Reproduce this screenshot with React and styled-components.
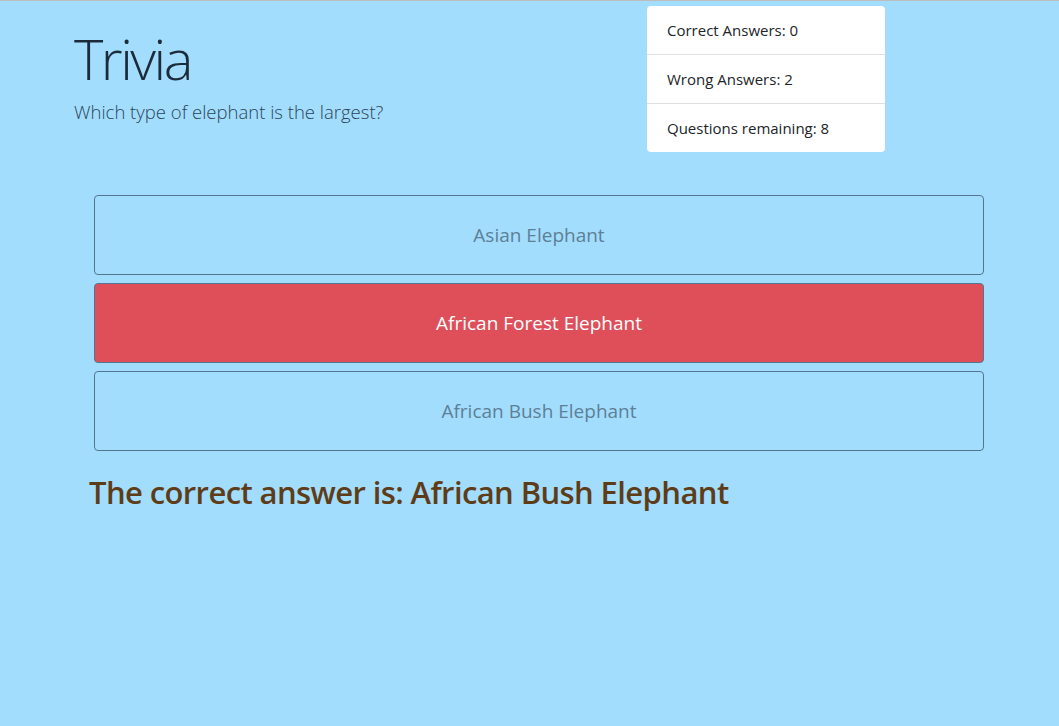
import React from "react";
import styled, { createGlobalStyle } from "styled-components";

const GlobalStyle = createGlobalStyle`
  html, body {
    margin: 0;
    padding: 0;
    background: #a2ddfe;
  }
  body {
    font-family: "Open Sans", "Noto Sans", sans-serif;
    border-top: 1px solid #bdbdbd;
    min-height: 725px;
  }
`;

const answers = [
  { text: "Asian Elephant", state: "idle" },
  { text: "African Forest Elephant", state: "wrong" },
  { text: "African Bush Elephant", state: "idle" },
];

const App = () => {
  return (
    <>
      <GlobalStyle />
      <Page>
        <Header>
          <TitleBlock>
            <Title>Trivia</Title>
            <Question>Which type of elephant is the largest?</Question>
          </TitleBlock>
          <Stats>
            <StatItem>Correct Answers: 0</StatItem>
            <StatItem>Wrong Answers: 2</StatItem>
            <StatItem>Questions remaining: 8</StatItem>
          </Stats>
        </Header>
        <Answers>
          {answers.map((a) => (
            <AnswerButton key={a.text} $wrong={a.state === "wrong"}>
              {a.text}
            </AnswerButton>
          ))}
        </Answers>
        <Result>The correct answer is: African Bush Elephant</Result>
      </Page>
    </>
  );
};

const Page = styled.div`
  display: flex;
  flex-direction: column;
`;

const Header = styled.div`
  display: flex;
  align-items: flex-start;
  padding-left: 74px;
  padding-top: 5px;
`;

const TitleBlock = styled.div`
  width: 573px;
  padding-top: 19px;
`;

const Title = styled.h1`
  margin: 0;
  font-size: 56px;
  font-weight: 300;
  line-height: 1.2;
  color: #1c2b3a;
  letter-spacing: -2.5px;
`;

const Question = styled.p`
  margin: 7px 0 0;
  font-size: 18.5px;
  font-weight: 300;
  color: #2c4558;
`;

const Stats = styled.ul`
  list-style: none;
  margin: 0;
  padding: 0;
  width: 238px;
  background: #fff;
  border-radius: 4px;
  overflow: hidden;
`;

const StatItem = styled.li`
  height: 48px;
  display: flex;
  align-items: center;
  padding: 0 20px;
  font-size: 15px;
  color: #212529;
  border-bottom: 1px solid #dfdfdf;
  &:last-child {
    border-bottom: none;
  }
`;

const Answers = styled.div`
  display: flex;
  flex-direction: column;
  gap: 8px;
  margin: 43px 0 0 94px;
  width: 890px;
`;

const AnswerButton = styled.button`
  height: 80px;
  border-radius: 4px;
  border: 1px solid #54758f;
  background: ${(p) => (p.$wrong ? "#de4f5a" : "transparent")};
  color: ${(p) => (p.$wrong ? "#fff" : "#5e7f96")};
  font-family: "Open Sans", "Noto Sans", sans-serif;
  font-size: 19px;
  font-weight: ${(p) => (p.$wrong ? 500 : 400)};
  cursor: pointer;
`;

const Result = styled.h2`
  margin: 20px 0 0 89px;
  font-size: 31px;
  font-weight: 600;
  letter-spacing: -0.6px;
  color: #5e3c17;
`;

export default App;
